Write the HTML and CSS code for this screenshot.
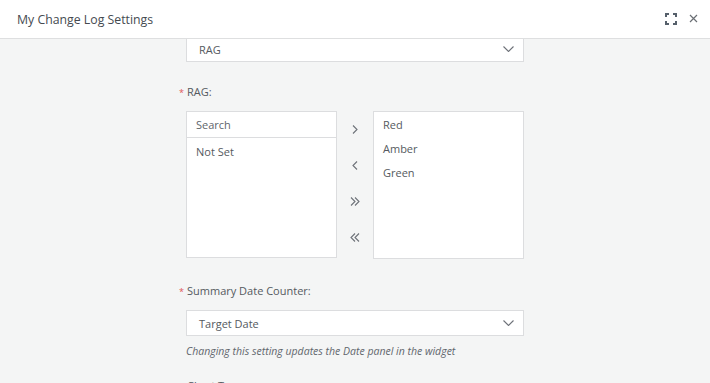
FILE: index.html
```html
<!DOCTYPE html>
<html lang="en">
<head>
    <meta charset="UTF-8">
    <title>My Change Log Settings</title>
    <link rel="stylesheet" href="styles.css">
</head>
<body>

    <div class="modal">
        <!-- Cabeçalho -->
        <div class="modal-header">
            <span class="modal-title">My Change Log Settings</span>
            <div class="header-icons">
                <svg class="icon-expand" width="12" height="12" viewBox="0 0 12 12">
                    <path d="M1 4V1h3M8 1h3v3M11 8v3H8M4 11H1V8" fill="none" stroke="#56606b" stroke-width="2"/>
                </svg>
                <svg class="icon-close" width="9" height="9" viewBox="0 0 9 9">
                    <path d="M1 1l7 7M8 1L1 8" fill="none" stroke="#6b6f75" stroke-width="1.2"/>
                </svg>
            </div>
        </div>

        <div class="modal-body">
            <div class="form">

                <div class="select first-select">
                    <span>RAG</span>
                    <svg width="11" height="6" viewBox="0 0 11 6"><path d="M0.5 0.5l5 5 5-5" fill="none" stroke="#6d7178" stroke-width="1.1"/></svg>
                </div>

                <div class="label"><span class="req">*</span>RAG:</div>

                <div class="transfer">
                    <div class="list left-list">
                        <div class="search">Search</div>
                        <ul>
                            <li>Not Set</li>
                        </ul>
                    </div>
                    <div class="arrows">
                        <svg width="8" height="9" viewBox="0 0 8 9"><path d="M2 0.5l4 4-4 4" fill="none" stroke="#6d7178" stroke-width="1.1"/></svg>
                        <svg width="8" height="9" viewBox="0 0 8 9"><path d="M6 0.5l-4 4 4 4" fill="none" stroke="#6d7178" stroke-width="1.1"/></svg>
                        <svg width="10" height="9" viewBox="0 0 10 9"><path d="M1 0.5l4 4-4 4M5 0.5l4 4-4 4" fill="none" stroke="#6d7178" stroke-width="1.1"/></svg>
                        <svg width="10" height="9" viewBox="0 0 10 9"><path d="M9 0.5l-4 4 4 4M5 0.5l-4 4 4 4" fill="none" stroke="#6d7178" stroke-width="1.1"/></svg>
                    </div>
                    <div class="list right-list">
                        <ul>
                            <li>Red</li>
                            <li>Amber</li>
                            <li>Green</li>
                        </ul>
                    </div>
                </div>

                <div class="label second-label"><span class="req">*</span>Summary Date Counter:</div>

                <div class="select">
                    <span>Target Date</span>
                    <svg width="11" height="6" viewBox="0 0 11 6"><path d="M0.5 0.5l5 5 5-5" fill="none" stroke="#6d7178" stroke-width="1.1"/></svg>
                </div>
                <div class="hint">Changing this setting updates the Date panel in the widget</div>

                <div class="label third-label"><span class="req">*</span>Chart Type:</div>
            </div>
        </div>
    </div>

</body>
</html>
```

FILE: styles.css
```css
* {
    margin: 0;
    padding: 0;
    box-sizing: border-box;
    font-family: 'Open Sans', sans-serif;
}

body {
    width: 710px;
    height: 383px;
    overflow: hidden;
    background-color: #f4f5f5;
    color: #555a60;
    font-size: 11px;
}

.modal {
    height: 383px;
    display: flex;
    flex-direction: column;
}

.modal-header {
    height: 39px;
    flex-shrink: 0;
    background-color: #ffffff;
    border-bottom: 1px solid #dedfe0;
    display: flex;
    align-items: center;
    justify-content: space-between;
    padding: 0 12px 0 17px;
}

.modal-title {
    font-size: 12.3px;
    color: #454a50;
}

.header-icons {
    display: flex;
    align-items: center;
    gap: 12px;
    padding-bottom: 1px;
}

.modal-body {
    flex: 1;
    overflow: hidden;
}

.form {
    width: 338px;
    margin: -3px 0 0 186px;
}

.select {
    height: 26px;
    background-color: #ffffff;
    border: 1px solid #dcdddf;
    display: flex;
    align-items: center;
    justify-content: space-between;
    padding: 0 9px 0 12px;
}

.label {
    position: relative;
    height: 16px;
    line-height: 16px;
    margin: 22px 0 11px 1px;
}

.req {
    position: absolute;
    left: -8px;
    top: 1px;
    color: #e05555;
    font-size: 9px;
}

.transfer {
    display: flex;
}

.list {
    width: 151px;
    height: 148px;
    background-color: #ffffff;
    border: 1px solid #dcdddf;
}

.left-list {
    height: 147px;
}

.search {
    height: 26px;
    line-height: 25px;
    padding-left: 9px;
    border-bottom: 1px solid #dcdddf;
    color: #60656b;
}

.list ul {
    list-style: none;
    padding: 5px 9px;
}

.list li {
    height: 24px;
    line-height: 18px;
}

.right-list ul {
    padding-top: 4px;
}

.arrows {
    width: 36px;
    display: flex;
    flex-direction: column;
    align-items: center;
    gap: 27px;
    padding-top: 14px;
}

.second-label {
    margin-top: 24px;
}

.hint {
    font-style: italic;
    color: #62676d;
    font-size: 10.5px;
    margin-top: 7px;
    line-height: 16px;
}

.third-label {
    margin-top: 19px;
}
```
